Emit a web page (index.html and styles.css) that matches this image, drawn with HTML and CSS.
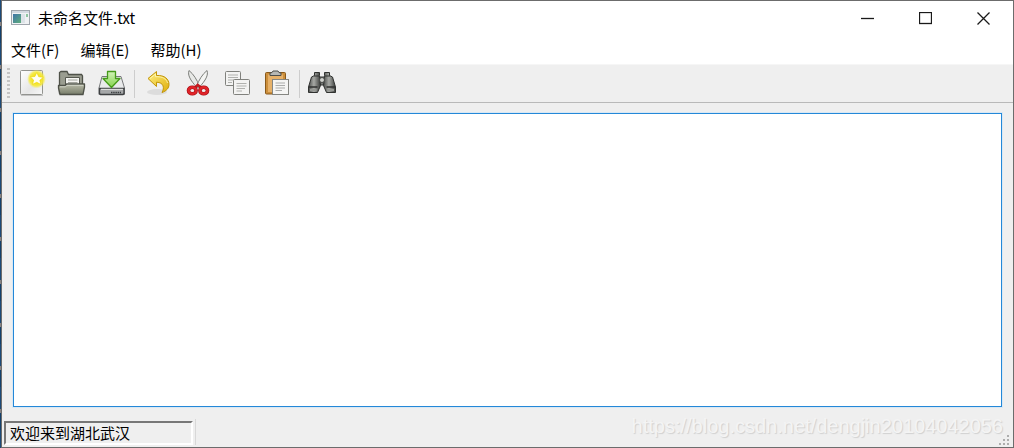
FILE: index.html
```html
<!DOCTYPE html>
<html lang="zh-CN">

<head>
    <meta charset="UTF-8">
    <meta name="viewport" content="width=device-width, initial-scale=1.0">
    <title>未命名文件.txt</title>
    <link rel="stylesheet" href="styles.css">
</head>

<body>
    <div class="window">
        <header class="titlebar">
            <svg class="app-icon" width="20" height="16" viewBox="0 0 20 16">
                <defs>
                    <linearGradient id="screen" x1="0" y1="0" x2="1" y2="1">
                        <stop offset="0" stop-color="#3f74a8" />
                        <stop offset="1" stop-color="#5fae7c" />
                    </linearGradient>
                </defs>
                <rect x="0.5" y="0.5" width="18" height="14" fill="#f0f2f4" stroke="#a0a6ad" />
                <rect x="1" y="1" width="17" height="2" fill="#d3d9e0" />
                <rect x="2" y="4" width="8" height="9" fill="url(#screen)" />
                <rect x="10" y="4" width="4" height="9" fill="#dde3e8" />
                <rect x="15" y="4" width="2" height="3" fill="#8ec5a0" />
            </svg>
            <h1 class="title">未命名文件.txt</h1>
            <div class="window-buttons">
                <button type="button" aria-label="最小化">
                    <svg width="13" height="13" viewBox="0 0 13 13"><path d="M0 6.5H13" /></svg>
                </button>
                <button type="button" aria-label="最大化">
                    <svg width="13" height="13" viewBox="0 0 13 13"><rect x="0.5" y="0.5" width="12" height="11" /></svg>
                </button>
                <button type="button" aria-label="关闭">
                    <svg width="13" height="13" viewBox="0 0 13 13"><path d="M0.5 0.5L12.5 12.5M12.5 0.5L0.5 12.5" /></svg>
                </button>
            </div>
        </header>

        <nav class="menubar">
            <button type="button">文件(F)</button>
            <button type="button">编辑(E)</button>
            <button type="button">帮助(H)</button>
        </nav>

        <div class="toolbar">
            <span class="handle"></span>
            <button type="button" aria-label="新建">
                <svg width="31" height="31" viewBox="0 0 31 31">
                    <defs>
                        <linearGradient id="paper" x1="0" y1="0" x2="1" y2="1">
                            <stop offset="0" stop-color="#ffffff" />
                            <stop offset="0.6" stop-color="#e6e6e6" />
                            <stop offset="1" stop-color="#f8f8f8" />
                        </linearGradient>
                        <radialGradient id="glow">
                            <stop offset="0.5" stop-color="#f4e52a" />
                            <stop offset="0.75" stop-color="#f6ea3c" stop-opacity="0.85" />
                            <stop offset="1" stop-color="#f6ee60" stop-opacity="0" />
                        </radialGradient>
                    </defs>
                    <rect x="3.5" y="2.5" width="22" height="24" rx="1" fill="url(#paper)" stroke="#92938f" />
                    <path d="M4 27.5H26" stroke="#c4c4c4" />
                    <circle cx="19.5" cy="11" r="9.5" fill="url(#glow)" />
                    <path d="M19.8 4.5L21.7 8.7L26.3 9.3L22.8 12.3L24 16.5L19.8 14.3L15.6 16.3L16.6 12L13.4 8.9L17.9 8.5Z" fill="#fffef2" stroke="#ecd400" stroke-width="0.6" />
                </svg>
            </button>
            <button type="button" aria-label="打开">
                <svg width="31" height="31" viewBox="0 0 31 31">
                    <defs>
                        <linearGradient id="folder" x1="0" y1="0" x2="0" y2="1">
                            <stop offset="0" stop-color="#babdaa" />
                            <stop offset="1" stop-color="#777c69" />
                        </linearGradient>
                    </defs>
                    <path d="M3.5 25V4.5L5 3.5H11L12.5 6.5H25.5L26.5 8V24Z" fill="#9a9d90" stroke="#4e5148" stroke-width="1.3" />
                    <path d="M9.5 17V9.5H23.5V17Z" fill="#f5f5f2" stroke="#565950" />
                    <path d="M12 12H21.5M12 14.5H21.5" stroke="#a3a59d" />
                    <path d="M2.5 17.5H9L10.5 16H28.5V19L27 26.5H4L2.5 20Z" fill="url(#folder)" stroke="#4e5148" stroke-width="1.3" stroke-linejoin="round" />
                    <path d="M4 18.8H9.5L11 17.3H27.3" fill="none" stroke="#d3d5c8" />
                </svg>
            </button>
            <button type="button" aria-label="保存">
                <svg width="31" height="31" viewBox="0 0 31 31">
                    <defs>
                        <linearGradient id="green" x1="0" y1="0" x2="0" y2="1">
                            <stop offset="0" stop-color="#d3f2ba" />
                            <stop offset="1" stop-color="#83d44a" />
                        </linearGradient>
                    </defs>
                    <path d="M7 8.5H26L29.5 20V26.5H4V20Z" fill="#e9eaeb" stroke="#77797b" stroke-linejoin="round" />
                    <path d="M4.5 20.5H29V25.5L28 26.5H5.5L4.5 25.5Z" fill="#a5a7a8" stroke="#3e4042" stroke-width="1.3" />
                    <path d="M6 21.3H28" stroke="#f2f2f2" />
                    <path d="M16 24.5H26" stroke="#3b3e40" stroke-width="1.5" stroke-dasharray="1.5 0.7" />
                    <path d="M12.5 3.5H20.5V10.5H25L16.5 19.5L8 10.5H12.5Z" fill="url(#green)" stroke="#469b1a" stroke-width="1.3" stroke-linejoin="round" />
                </svg>
            </button>
            <span class="separator"></span>
            <button type="button" aria-label="撤销">
                <svg width="31" height="31" viewBox="0 0 31 31">
                    <defs>
                        <linearGradient id="gold" x1="0" y1="0" x2="1" y2="1">
                            <stop offset="0" stop-color="#fff083" />
                            <stop offset="1" stop-color="#dfae0b" />
                        </linearGradient>
                    </defs>
                    <ellipse cx="14" cy="24" rx="10" ry="3" fill="#dcdcdc" />
                    <path d="M5 10.5L13.5 3.5V7.5C21.5 7 26 11 26 16.5C26 20 23.500 23 19 24.5C21.5 20 21 14.5 13.5 14.2V18.5Z" fill="url(#gold)" stroke="#c29508" stroke-linejoin="round" />
                    <path d="M7 10.5L12.5 6V8.7C19.5 8.3 23.5 11 24.5 15" fill="none" stroke="#fff9bd" stroke-width="0.8" />
                </svg>
            </button>
            <button type="button" aria-label="剪切">
                <svg width="31" height="31" viewBox="0 0 31 31">
                    <path d="M7 2.5C5.5 7 8 12 15 19.5L17.5 18C15 12 11.5 6 7 2.5Z" fill="#e8e9e7" stroke="#7c7e7a" />
                    <path d="M25 2.5C26.5 7 24 12 17 19.5L14.5 18C17 12 20.5 6 25 2.5Z" fill="#f4f5f3" stroke="#7c7e7a" />
                    <path d="M12.5 20L15.8 17L19.5 20" fill="none" stroke="#c51c20" stroke-width="2.5" />
                    <ellipse cx="10.3" cy="22.5" rx="3.8" ry="3.3" fill="#eeeeee" stroke="#a50e14" stroke-width="3.6" />
                    <ellipse cx="10.3" cy="22.5" rx="3.8" ry="3.3" fill="none" stroke="#df2429" stroke-width="2.4" />
                    <ellipse cx="21.7" cy="22.5" rx="3.8" ry="3.3" fill="#eeeeee" stroke="#a50e14" stroke-width="3.6" />
                    <ellipse cx="21.7" cy="22.5" rx="3.8" ry="3.3" fill="none" stroke="#df2429" stroke-width="2.4" />
                </svg>
            </button>
            <button type="button" aria-label="复制">
                <svg width="31" height="31" viewBox="0 0 31 31">
                    <rect x="4.5" y="3.5" width="15" height="14" rx="1" fill="#f3f3f2" stroke="#80817d" />
                    <path d="M7 7H17M7 9.5H17M7 12H15M7 14.5H11" stroke="#b0b1ae" />
                    <rect x="12.5" y="11.5" width="16" height="15" rx="1" fill="#f3f3f2" stroke="#80817d" />
                    <path d="M15.5 15.5H25.5M15.5 18H25.5M15.5 20.5H24M15.5 23H21" stroke="#b0b1ae" />
                </svg>
            </button>
            <button type="button" aria-label="粘贴">
                <svg width="31" height="31" viewBox="0 0 31 31">
                    <rect x="5.5" y="4.5" width="20" height="21.5" rx="1" fill="#cc8f3c" stroke="#89591a" />
                    <rect x="8" y="6.5" width="15" height="17.5" fill="#e6b169" />
                    <path d="M10 7.5V5L12 4.500L13 3H18L19 4.5L21 5V7.5Z" fill="#b6b8b5" stroke="#4c4e4b" />
                    <rect x="12.5" y="11.5" width="16" height="15" fill="#f5f5f4" stroke="#858682" />
                    <path d="M15.5 15H25M15.5 17.5H25M15.5 20H25M15.5 22.5H22" stroke="#abacab" />
                </svg>
            </button>
            <span class="separator"></span>
            <button type="button" aria-label="查找">
                <svg width="31" height="31" viewBox="0 0 31 31">
                    <defs>
                        <linearGradient id="barrel" x1="0" y1="0" x2="1" y2="0">
                            <stop offset="0" stop-color="#4c4e4c" />
                            <stop offset="0.45" stop-color="#a7a9a5" />
                            <stop offset="1" stop-color="#3c3e3c" />
                        </linearGradient>
                    </defs>
                    <path d="M10 9H18V17H10Z" fill="#777976" stroke="#353735" />
                    <path d="M6.5 4.5H11.5V7.5L12.5 17.5L9.5 24.5H0.5V19L3.5 9L6.500 7.5Z" fill="url(#barrel)" stroke="#303230" stroke-linejoin="round" />
                    <path d="M16.5 4.5H21.5V7.5L24.5 9L27.5 19V24.5H18.5L15.5 17.5L16.5 7.5Z" fill="url(#barrel)" stroke="#303230" stroke-linejoin="round" />
                    <path d="M1 19H9.5M18.5 19H27" stroke="#303230" stroke-width="1.5" />
                    <path d="M2 22H8.5M19.5 22H26" stroke="#969894" stroke-width="2" />
                    <path d="M6 8H11M17 8H22" stroke="#303230" />
                    <circle cx="14" cy="12" r="2.5" fill="#d0d2ce" stroke="#444644" />
                </svg>
            </button>
        </div>

        <main class="content">
            <textarea class="editor" aria-label="文本" spellcheck="false"></textarea>
        </main>

        <footer class="statusbar">
            <span class="status-label">欢迎来到湖北武汉</span>
            <span class="status-divider"></span>
            <svg class="grip" width="11" height="10" viewBox="0 0 11 10">
                <path d="M8 0h2v2h-2zM4 4h2v2h-2zM8 4h2v2h-2zM0 8h2v2h-2zM4 8h2v2h-2zM8 8h2v2h-2z" fill="#adadad" />
            </svg>
        </footer>
        <span class="watermark">https://blog.csdn.net/dengjin20104042056</span>
    </div>
</body>

</html>
```
FILE: styles.css
```css
* {
    box-sizing: border-box;
}

body {
    margin: 0;
    padding-left: 1px;
    background: repeating-linear-gradient(#1c4a78 0 22px, #8a8482 22px 26px, #12406c 26px 43px);
    font-family: "Noto Sans CJK SC", sans-serif;
    font-size: 15px;
    color: #000;
}

button {
    padding: 0;
    border: none;
    background: none;
    font: inherit;
    color: inherit;
}

.window {
    position: relative;
    display: flex;
    flex-direction: column;
    min-height: 100vh;
    border: 1px solid #6c6c6c;
    background: #efefef;
}

/* title bar */
.titlebar {
    display: flex;
    align-items: center;
    height: 34px;
    padding: 0 1px 0 9px;
    background: #fff;
}

.title {
    margin: 0 0 0 7px;
    font-size: 15px;
    font-weight: normal;
    line-height: 20px;
}

.window-buttons {
    display: flex;
    height: 100%;
    margin-left: auto;
}

.window-buttons button {
    display: flex;
    align-items: center;
    justify-content: center;
    width: 58px;
}

.window-buttons svg {
    fill: none;
    stroke: #1a1a1a;
    stroke-width: 1.3;
}

/* menu bar */
.menubar {
    display: flex;
    gap: 21px;
    height: 29px;
    padding-left: 9px;
    background: #fff;
}

.menubar button {
    line-height: 27px;
}

/* tool bar */
.toolbar {
    display: flex;
    align-items: center;
    height: 39px;
    padding-left: 5px;
    border-top: 1px solid #f6f6f6;
    border-bottom: 1px solid #b9b9b9;
}

.toolbar button {
    display: flex;
    justify-content: center;
    width: 39px;
}

.handle {
    width: 3px;
    height: 31px;
    margin-right: 3px;
    background: repeating-linear-gradient(#c4c4c4 0 2px, transparent 2px 4px);
}

.separator {
    width: 1px;
    height: 28px;
    margin: 0 4px;
    background: #cdcdcd;
}

/* text area */
.content {
    display: flex;
    flex: 1;
    padding: 10px 11px 0;
}

.editor {
    flex: 1;
    padding: 4px;
    border: 1px solid #2488d8;
    outline: none;
    background: #fff;
    box-shadow: 0 0 0 1px #d9e8f4;
    font: inherit;
    resize: none;
}

/* status bar */
.statusbar {
    display: flex;
    align-items: flex-end;
    height: 40px;
    padding: 0 3px 2px 2px;
}

.status-label {
    width: 189px;
    height: 24px;
    padding-left: 4px;
    border: 2px solid;
    border-color: #777 #fff #fff #777;
    line-height: 20px;
}

.status-divider {
    width: 1px;
    height: 26px;
    margin-left: 2px;
    background: #d8d8d8;
}

.grip {
    margin-left: auto;
}

.watermark {
    position: absolute;
    right: 10px;
    bottom: 9px;
    font-family: "Liberation Sans", sans-serif;
    font-size: 20px;
    line-height: 24px;
    color: #f4f4f4;
    text-shadow: 1px 1px 1px #d0d0d0;
    pointer-events: none;
}
```
